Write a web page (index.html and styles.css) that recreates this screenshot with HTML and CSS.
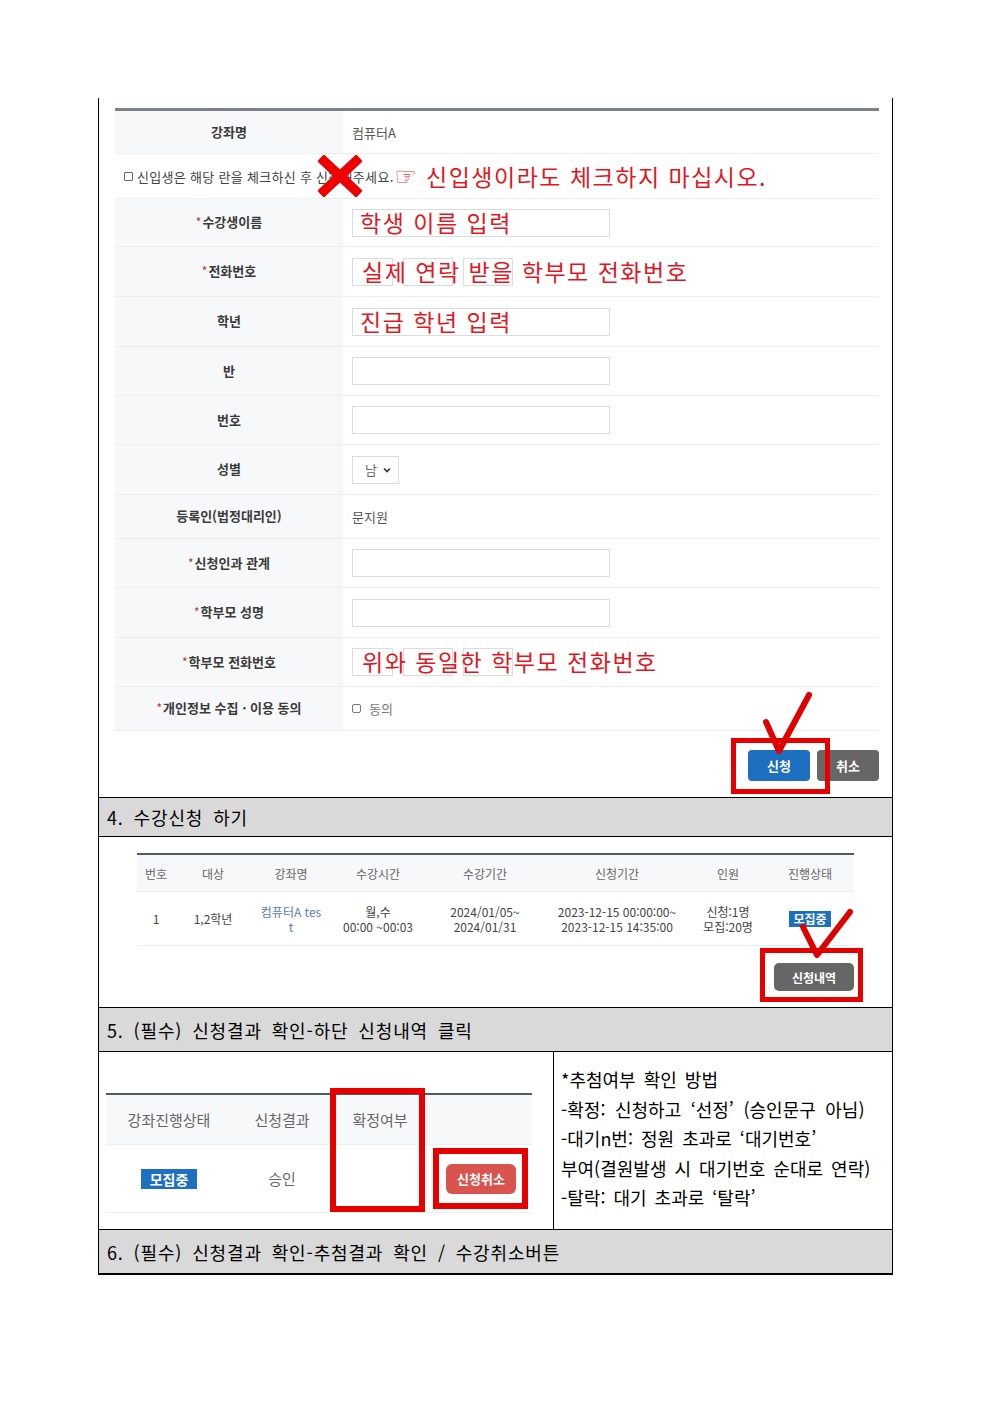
FILE: index.html
```html
<!DOCTYPE html>
<html lang="ko">
<head>
  <meta charset="utf-8">
  <title>수강신청 안내</title>
  <link rel="stylesheet" href="styles.css">
</head>
<body>
  <div class="doc">

    <!-- 3. 신청서 작성 화면 -->
    <div class="cell shot-apply">
      <div class="form-table">
        <div class="frow h43">
          <div class="flabel">강좌명</div>
          <div class="fvalue">컴퓨터A</div>
        </div>
        <div class="frow h45 notice-row">
          <span class="box"></span>
          <span class="notice">신입생은 해당 란을 체크하신 후 신청해주세요.</span>
          <span class="hand">☞</span>
          <span class="note wide">신입생이라도 체크하지 마십시오.</span>
        </div>
        <div class="frow h48">
          <div class="flabel"><i>*</i>수강생이름</div>
          <div class="fvalue">
            <span class="input"></span>
            <span class="note">학생 이름 입력</span>
          </div>
        </div>
        <div class="frow h50">
          <div class="flabel"><i>*</i>전화번호</div>
          <div class="fvalue phone">
            <span class="input w41"></span>
            <span class="input w50"></span>
            <span class="input w50"></span>
            <span class="note">실제 연락 받을 학부모 전화번호</span>
          </div>
        </div>
        <div class="frow h50">
          <div class="flabel">학년</div>
          <div class="fvalue">
            <span class="input"></span>
            <span class="note">진급 학년 입력</span>
          </div>
        </div>
        <div class="frow h49">
          <div class="flabel">반</div>
          <div class="fvalue"><span class="input"></span></div>
        </div>
        <div class="frow h49">
          <div class="flabel">번호</div>
          <div class="fvalue"><span class="input"></span></div>
        </div>
        <div class="frow h50">
          <div class="flabel">성별</div>
          <div class="fvalue">
            <span class="select">남
              <svg width="8" height="6" viewBox="0 0 8 6"><path d="M1 1.5 L4 4.5 L7 1.5" fill="none" stroke="#333" stroke-width="1.6"/></svg>
            </span>
          </div>
        </div>
        <div class="frow h44">
          <div class="flabel">등록인(법정대리인)</div>
          <div class="fvalue">문지원</div>
        </div>
        <div class="frow h49">
          <div class="flabel"><i>*</i>신청인과 관계</div>
          <div class="fvalue"><span class="input"></span></div>
        </div>
        <div class="frow h50">
          <div class="flabel"><i>*</i>학부모 성명</div>
          <div class="fvalue"><span class="input"></span></div>
        </div>
        <div class="frow h49">
          <div class="flabel"><i>*</i>학부모 전화번호</div>
          <div class="fvalue phone">
            <span class="input w41"></span>
            <span class="input w50"></span>
            <span class="input w50"></span>
            <span class="note">위와 동일한 학부모 전화번호</span>
          </div>
        </div>
        <div class="frow h44">
          <div class="flabel"><i>*</i>개인정보 수집 · 이용 동의</div>
          <div class="fvalue agree"><span class="box"></span>동의</div>
        </div>
      </div>

      <div class="btn-row">
        <span class="btn blue">신청</span>
        <span class="btn gray">취소</span>
      </div>

      <!-- 빨간 표시 -->
      <svg class="mark cross" width="44" height="42" viewBox="0 0 44 42">
        <path d="M6 6 L38 36 M38 6 L6 36" stroke="#ee0000" stroke-width="9.5" stroke-linecap="square"/>
      </svg>
      <span class="frame apply-frame"></span>
      <svg class="mark apply-check" width="56" height="66" viewBox="0 0 56 66">
        <path d="M6 32 L19 61 L49 5" fill="none" stroke="#e00000" stroke-width="6" stroke-linecap="round" stroke-linejoin="round"/>
      </svg>
    </div>

    <div class="head">4. 수강신청 하기</div>

    <!-- 4. 강좌 목록 화면 -->
    <div class="cell shot-list">
      <div class="list-table">
        <div class="lrow lhead">
          <span>번호</span><span>대상</span><span>강좌명</span><span>수강시간</span>
          <span>수강기간</span><span>신청기간</span><span>인원</span><span>진행상태</span>
        </div>
        <div class="lrow ldata">
          <span>1</span>
          <span>1,2학년</span>
          <span class="link">컴퓨터A tes<br>t</span>
          <span>월,수<br>00:00 ~00:03</span>
          <span>2024/01/05~<br>2024/01/31</span>
          <span>2023-12-15 00:00:00~<br>2023-12-15 14:35:00</span>
          <span>신청:1명<br>모집:20명</span>
          <span><b class="badge">모집중</b></span>
        </div>
      </div>
      <div class="btn-row list-btns">
        <span class="btn gray history">신청내역</span>
      </div>

      <span class="frame list-frame"></span>
      <svg class="mark list-check" width="60" height="56" viewBox="0 0 60 56">
        <path d="M6 21 L20 49 L53 6" fill="none" stroke="#e00000" stroke-width="6" stroke-linecap="round" stroke-linejoin="round"/>
      </svg>
    </div>

    <div class="head tall">5. (필수) 신청결과 확인-하단 신청내역 클릭</div>

    <!-- 5. 신청결과 화면 + 설명 -->
    <div class="split">
      <div class="cell shot-result">
        <div class="result-table">
          <div class="rrow rhead">
            <span>강좌진행상태</span><span>신청결과</span><span>확정여부</span><span></span>
          </div>
          <div class="rrow rdata">
            <span><b class="badge big">모집중</b></span>
            <span>승인</span>
            <span></span>
            <span class="cancel-cell"><b class="btn red">신청취소</b></span>
          </div>
        </div>
        <span class="frame result-frame-a"></span>
        <span class="frame result-frame-b"></span>
      </div>
      <div class="guide">
        <p>*추첨여부 확인 방법</p>
        <p class="wide">-확정: 신청하고 ‘선정’ (승인문구 아님)</p>
        <p>-대기n번: 정원 초과로 ‘대기번호’</p>
        <p>부여(결원발생 시 대기번호 순대로 연락)</p>
        <p>-탈락: 대기 초과로 ‘탈락’</p>
      </div>
    </div>

    <div class="head tall">6. (필수) 신청결과 확인-추첨결과 확인 / 수강취소버튼</div>
  </div>
</body>
</html>
```

FILE: styles.css
```css
/* 수강신청 안내 문서 - 표 + 화면 캡처 */
body {
  margin: 0;
  background: #fff;
  font-family: "Noto Sans CJK KR", "Noto Sans", sans-serif;
  color: #000;
}

.doc {
  width: 795px;
  margin: 98px 0 0 98px;
  border: 1px solid #000;
  border-top: 0;
  box-sizing: border-box;
}

.cell {
  position: relative;
}

.head {
  height: 40px;
  border-top: 1px solid #000;
  border-bottom: 1px solid #000;
  background: #d9d9d9;
  box-sizing: border-box;
  display: flex;
  align-items: center;
  padding-left: 8px;
  font-size: 18px;
  letter-spacing: 0.85px;
  word-spacing: 4px;
}

.head.tall {
  height: 45px;
}

/* ---------- 신청서 ---------- */
.shot-apply {
  height: 699px;
  padding: 10px 13px 0 16px;
  box-sizing: border-box;
}

.form-table {
  border-top: 3px solid #7d8088;
}

.frow {
  display: flex;
  border-bottom: 1px solid #edeef1;
  box-sizing: border-box;
  font-size: 13px;
}

.h43 { height: 43px; }
.h44 { height: 44px; }
.h45 { height: 45px; }
.h48 { height: 48px; }
.h49 { height: 49px; }
.h50 { height: 50px; }

.flabel {
  width: 228px;
  flex: none;
  background: #f7f8fa;
  display: flex;
  align-items: center;
  justify-content: center;
  padding-bottom: 2px;
  box-sizing: border-box;
  font-weight: 700;
  color: #3a3a3a;
}

.flabel i {
  font-style: normal;
  color: #c8303a;
  font-weight: 400;
  font-size: 12px;
  margin-right: 1px;
}

.fvalue {
  position: relative;
  flex: 1;
  display: flex;
  align-items: center;
  padding-left: 9px;
  color: #555;
}

.input {
  width: 258px;
  height: 28px;
  border: 1px solid #dcdcdc;
  box-sizing: border-box;
  background: #fff;
}

.phone { gap: 10px; }
.input.w41 { width: 41px; }
.input.w50 { width: 50px; }

.note {
  position: absolute;
  left: 17px;
  top: 50%;
  transform: translateY(-53%);
  color: #e3161e;
  font-size: 23px;
  letter-spacing: 1.5px;
  white-space: nowrap;
}

.phone .note { left: 19px; }

.notice-row {
  align-items: center;
  padding-left: 9px;
  color: #444;
}

.notice-row .notice {
  font-size: 13px;
  letter-spacing: 0.3px;
  margin-left: 4px;
}

.box {
  width: 9px;
  height: 9px;
  border: 1px solid #666;
  border-radius: 1px;
  box-sizing: border-box;
  flex: none;
}

.hand {
  font-family: "DejaVu Sans", sans-serif;
  color: #e4362f;
  font-size: 25px;
  line-height: 1;
  margin-left: 1px;
}

.notice-row .note.wide {
  position: static;
  transform: none;
  margin-left: 9px;
}

.select {
  width: 47px;
  height: 28px;
  border: 1px solid #dcdcdc;
  box-sizing: border-box;
  display: flex;
  align-items: center;
  justify-content: space-between;
  padding: 0 7px 0 12px;
  color: #666;
}

.agree {
  gap: 8px;
  color: #777;
}

.agree .box {
  border-color: #777;
  border-radius: 2px;
}

.btn-row {
  display: flex;
  justify-content: flex-end;
  gap: 7px;
  margin-top: 19px;
}

.btn {
  display: flex;
  align-items: center;
  justify-content: center;
  width: 62px;
  height: 31px;
  border-radius: 4px;
  color: #fff;
  font-size: 13px;
  font-weight: 700;
}

.btn.blue { background: #1e6fbf; }
.btn.gray { background: #666; }

/* 빨간 강조 표시 */
.mark,
.frame {
  position: absolute;
}

.frame {
  border: 5px solid #e60000;
  box-sizing: border-box;
}

.cross { left: 219px; top: 57px; }
.apply-frame { left: 632px; top: 640px; width: 99px; height: 56px; }
.apply-check { left: 661px; top: 592px; }

/* ---------- 강좌 목록 ---------- */
.shot-list {
  height: 170px;
  padding: 16px 38px 0 38px;
  box-sizing: border-box;
}

.list-table {
  border-top: 2px solid #4f5b6d;
}

.lrow {
  display: grid;
  grid-template-columns: 38px 76px 80px 94px 120px 144px 78px 86px;
  border-bottom: 1px solid #eceef1;
  box-sizing: border-box;
  font-size: 12px;
  line-height: 15px;
  text-align: center;
}

.lrow span {
  display: flex;
  align-items: center;
  justify-content: center;
}

.lhead {
  height: 37px;
  background: #f7f8fa;
  color: #666;
}

.ldata {
  height: 54px;
  color: #444;
}

.ldata .link { color: #5a7bbf; }

.badge {
  display: inline-block;
  background: #1c6fc1;
  color: #fff;
  font-size: 12px;
  font-weight: 700;
  line-height: 16px;
  padding: 0 4px;
}

.list-btns {
  margin-top: 17px;
}

.btn.history {
  width: 80px;
  height: 28px;
  border-radius: 5px;
  font-size: 12px;
}

.list-frame { left: 661px; top: 111px; width: 103px; height: 54px; }
.list-check { left: 698px; top: 69px; }

/* ---------- 신청결과 ---------- */
.split {
  display: flex;
  height: 177px;
}

.shot-result {
  width: 455px;
  flex: none;
  border-right: 1px solid #000;
  padding: 41px 0 0 7px;
  box-sizing: border-box;
}

.result-table {
  width: 426px;
  border-top: 2px solid #4f5b6d;
}

.rrow {
  display: grid;
  grid-template-columns: 126px 100px 96px 104px;
  border-bottom: 1px solid #eceef1;
  box-sizing: border-box;
  font-size: 15px;
  color: #666;
}

.rrow span {
  display: flex;
  align-items: center;
  justify-content: center;
}

.rhead {
  height: 50px;
  background: #f7f8fa;
}

.rdata {
  height: 68px;
}

.badge.big {
  font-size: 14px;
  line-height: 20px;
  padding: 0 9px;
}

.rrow .cancel-cell {
  justify-content: flex-start;
  padding-left: 18px;
}

.btn.red {
  width: 70px;
  height: 30px;
  border-radius: 6px;
  background: #d9534f;
  font-size: 13px;
}

.result-frame-a { left: 231px; top: 36px; width: 95px; height: 124px; border-width: 6px; }
.result-frame-b { left: 334px; top: 96px; width: 95px; height: 61px; border-width: 6px; }

.guide {
  flex: 1;
  padding: 13px 0 0 7px;
  font-size: 18px;
  line-height: 29.5px;
  word-spacing: 3px;
}

.guide p {
  margin: 0;
}

.guide p.wide {
  word-spacing: 4.5px;
}
```
